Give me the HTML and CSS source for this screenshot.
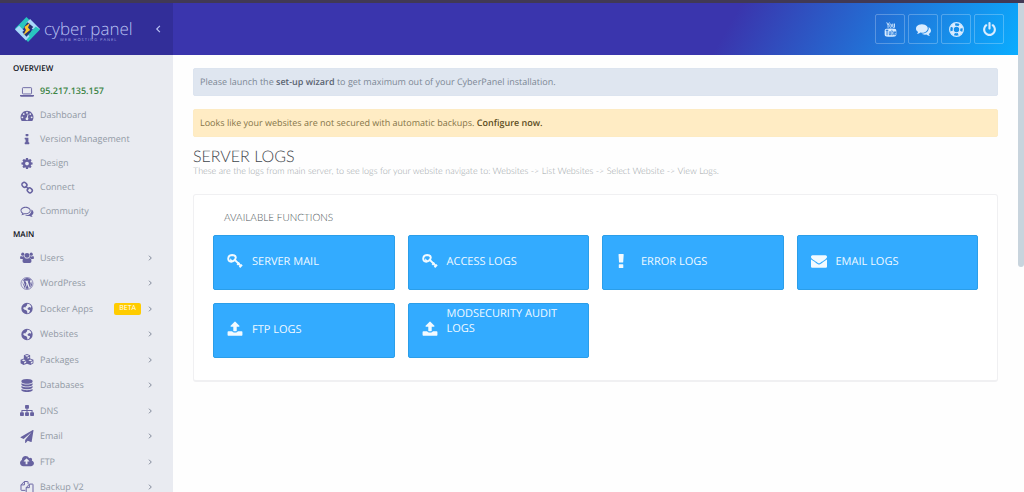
FILE: index.html
```html
<!DOCTYPE html>
<html lang="en">
<head>
<meta charset="utf-8">
<title>Server Logs - CyberPanel</title>
<meta name="viewport" content="width=device-width, initial-scale=1">
<link rel="stylesheet" href="styles.css">
</head>
<body>
<svg class="sprite" aria-hidden="true">
  <symbol id="laptop" viewBox="0 0 20 16"><rect x="3.500" y="2.500" width="13" height="9" rx="1" fill="none" stroke="currentColor" stroke-width="1.300"/><path d="M0 13h20v1q0 1.400-2 1.400H2q-2 0-2-1.400z"/></symbol>
  <symbol id="dashboard" viewBox="0 0 1792 1792"><path fill-rule="evenodd" d="M1792 1152q0 261-141 483-19 29-54 29H195q-35 0-54-29Q0 1414 0 1152q0-182 71-348t191-286 286-191 348-71 348 71 286 191 191 286 71 348zM384 1152a128 128 0 1 0-256 0a128 128 0 1 0 256 0zM576 704a128 128 0 1 0-256 0a128 128 0 1 0 256 0zM1024 512a128 128 0 1 0-256 0a128 128 0 1 0 256 0zM1472 704a128 128 0 1 0-256 0a128 128 0 1 0 256 0zM1664 1152a128 128 0 1 0-256 0a128 128 0 1 0 256 0zM1004 1185l101-382q6-26-7.500-48.500t-38.500-29.500-48 6.500-30 39.500l-101 382q-60 5-107 43.500t-63 98.500q-20 77 20 146t117 89 146-20 89-117q16-60-6-117t-72-91z"/></symbol>
  <symbol id="info" viewBox="0 0 1792 1792"><path d="M1216 1344v128q0 26-19 45t-45 19h-512q-26 0-45-19t-19-45v-128q0-26 19-45t45-19h64v-384h-64q-26 0-45-19t-19-45v-128q0-26 19-45t45-19h384q26 0 45 19t19 45v576h64q26 0 45 19t19 45zm-128-1152v192q0 26-19 45t-45 19h-256q-26 0-45-19t-19-45v-192q0-26 19-45t45-19h256q26 0 45 19t19 45z"/></symbol>
  <symbol id="cog" viewBox="0 0 1792 1792"><path d="M1152 896q0-106-75-181t-181-75-181 75-75 181 75 181 181 75 181-75 75-181zm512-109v222q0 12-8 23t-20 13l-185 28q-19 54-39 91 35 50 107 138 10 12 10 25t-9 23q-27 37-99 108t-94 71q-12 0-26-9l-138-108q-44 23-91 38-16 136-29 186-7 28-36 28h-222q-14 0-24.500-8.500t-11.500-21.500l-28-184q-49-16-90-37l-141 107q-10 9-25 9-14 0-25-11-126-114-165-168-7-10-7-23 0-12 8-23 15-21 51-66.500t54-70.500q-27-50-41-99l-183-27q-13-2-21-12.500t-8-23.500v-222q0-12 8-23t19-13l186-28q14-46 39-92-40-57-107-138-10-12-10-24 0-10 9-23 26-36 98.500-107.500t94.500-71.500q13 0 26 10l138 107q44-23 91-38 16-136 29-186 7-28 36-28h222q14 0 24.500 8.500t11.500 21.500l28 184q49 16 90 37l142-107q9-9 24-9 13 0 25 10 129 119 165 170 7 8 7 22 0 12-8 23-15 21-51 66.500t-54 70.500q26 50 41 98l183 28q13 2 21 12.500t8 23.500z"/></symbol>
  <symbol id="chain" viewBox="0 0 16 16"><g fill="none" stroke="currentColor" stroke-width="1.900"><rect x="1.700" y="2" width="6.200" height="5.400" rx="2.500" transform="rotate(45 4.800 4.700)"/><rect x="8.300" y="8.800" width="6.200" height="5.400" rx="2.500" transform="rotate(45 11.400 11.500)"/><path d="M6.200 6.200l4 4"/></g></symbol>
  <symbol id="talk" viewBox="0 0 1792 1792"><path fill-rule="evenodd" d="M704 384q-153 0-286 52t-211.500 141T128 768q0 82 53 158t149 132l97 56-35 84q34-20 62-39l44-31 53 10q78 14 153 14 153 0 286-52t211.500-141T1280 768t-78.500-191T990 436t-286-52zm0-128c389 0 704 229 704 512s-315 512-704 512q-86 0-176-16-124 88-278 128-36 9-86 16-28 2-35-26c-4-20 45-60 82-110q24-34 43-80Q0 1040 0 768c0-283 315-512 704-512z"/><path d="M1526 1425q24 56 52 92c30 40 80 90 75 105q-10 32-41 26-50-7-86-16-154-40-278-128-90 16-176 16-271 0-472-132 480 30 690-160 260-190 214-600 288 150 288 396 0 250-266 401z"/></symbol>
  <symbol id="comments" viewBox="0 0 1792 1792"><path d="M1408 768q0 139-94 257t-256.500 186.500-353.500 68.500q-86 0-176-16-124 88-278 128-36 9-86 16-28 2-35-26c-4-20 45-60 82-110q24-34 43-80-124-72-195-177T0 768q0-139 94-257t256.500-186.500 353.500-68.500 353.500 68.500 256.500 186.500 94 257zm384 256q0 120-71 224.500t-195 176.500q24 56 52 92c30 40 80 90 75 105q-10 32-41 26-50-7-86-16-154-40-278-128-90 16-176 16-271 0-472-132 58 4 88 4 161 0 309-45t264-129q125-92 192-212t67-254q0-77-23-152 129 71 204 178t75 230z"/></symbol>
  <symbol id="users" viewBox="0 0 20 16"><circle cx="4" cy="3.300" r="2.300"/><circle cx="16" cy="3.300" r="2.300"/><circle cx="10" cy="5" r="3.400"/><path d="M0 9q0-3.200 1.500-3.200Q4 7.400 5.800 6q.4 1.800 1.300 2.600-1.700.2-2.600 1.500H1.600Q0 10.100 0 9zM20 9q0-3.200-1.500-3.200Q16 7.400 14.200 6q-.4 1.800-1.300 2.600 1.700.2 2.600 1.500h2.900Q20 10.100 20 9zM3.600 13.400q0-5 3-5.100 3.400 2.500 6.800 0 3 .1 3 5.100 0 2.400-2.400 2.400H6q-2.400 0-2.400-2.400z"/></symbol>
  <symbol id="wordpress" viewBox="0 0 16 16"><circle cx="8" cy="8" r="7.400" fill="none" stroke="currentColor" stroke-width=".8"/><path d="M1.700 5.300l3.700 9.100 2-6.100-1.200-3.100h-.9v-.7h4.500v.7h-1l2.500 7.500 1.200-3.900c.6-2-1.300-2.500-.7-4.200.3-.7.900-.9 1.400-.8A6.300 6.300 0 0 0 2.700 4.500h2v.7h-.9l2.300 7.100zM8.200 8.900l-1.900 5.300q2 .6 3.900-.1zM13.900 5.200c.1 1.600-.6 3-1.100 4.500l-1.500 4.100q4.600-3.500 2.600-8.600z"/></symbol>
  <symbol id="globe" viewBox="0 0 16 16"><path fill-rule="evenodd" d="M8 1a7 7 0 1 0 0 14A7 7 0 1 0 8 1zM8.500 2.200l2.600.7 2.100 2.400-.5 1.800-1.400-.9-1.500.5-1.300 1.500 1 1.400 1.800.2.500 1.100-1.300 2.200-2 .9-.3-2.200-1-1.500-2.700-1-1.400-1.800 1.700-1.200 1 .9.500-1.500 1.600-1.300z"/></symbol>
  <symbol id="cubes" viewBox="0 0 20 16"><path fill-rule="evenodd" d="M10 0l4.500 1.900v4.600l4.700 2v5L15 16l-5-2.100L5 16 .8 13.500v-5l4.700-2V1.900zM10 1.500L7 2.800l3 1.200 3-1.200zM10.700 7.100l2.600-1.200V4.100l-2.600 1.100zM5.200 8L2.300 9.200l2.900 1.200 2.900-1.200zM14.800 8l-2.900 1.200 2.900 1.200 2.900-1.200zM5.900 14l2.900-1.300v-2.200l-2.900 1.200zM15.500 14l2.500-1.300v-2.200l-2.500 1.200z"/></symbol>
  <symbol id="database" viewBox="0 0 1792 1792"><path d="M896 768q237 0 443-43t325-127v170q0 69-103 128t-280 93.500-385 34.500-385-34.500-280-93.500-103-128v-170q119 84 325 127t443 43zm0 768q237 0 443-43t325-127v170q0 69-103 128t-280 93.500-385 34.500-385-34.500-280-93.500-103-128v-170q119 84 325 127t443 43zm0-384q237 0 443-43t325-127v170q0 69-103 128t-280 93.500-385 34.500-385-34.500-280-93.500-103-128v-170q119 84 325 127t443 43zm0-1152q208 0 385 34.500t280 93.500 103 128v128q0 69-103 128t-280 93.500-385 34.500-385-34.500-280-93.500-103-128v-128q0-69 103-128t280-93.500 385-34.500z"/></symbol>
  <symbol id="sitemap" viewBox="0 0 18 16"><rect x="6.500" y="1" width="5" height="4.600" rx=".9"/><rect y="10.400" width="5" height="4.600" rx=".9"/><rect x="6.500" y="10.400" width="5" height="4.600" rx=".9"/><rect x="13" y="10.400" width="5" height="4.600" rx=".9"/><path d="M9 5v6M2.500 11V8h13v3" fill="none" stroke="currentColor" stroke-width="1.300"/></symbol>
  <symbol id="plane" viewBox="0 0 1792 1792"><path d="M1764 11q33 24 27 64l-256 1536q-5 29-32 45-14 8-31 8-11 0-24-5l-453-185-242 295q-18 23-49 23-13 0-22-4-19-7-30.500-23.500t-11.500-36.500v-349l864-1059-1069 925-395-162q-37-14-40-55-2-40 32-59l1664-960q15-9 32-9 20 0 36 11z"/></symbol>
  <symbol id="cloud" viewBox="0 0 1920 1792"><path d="M1280 864q0-14-9-23l-352-352q-9-9-23-9t-23 9l-351 351q-10 12-10 24 0 14 9 23t23 9h224v352q0 13 9.500 22.500t22.500 9.500h192q13 0 22.500-9.500t9.500-22.500v-352h224q13 0 22.500-9.500t9.500-22.500zm640 288q0 159-112.500 271.500t-271.500 112.500h-1088q-185 0-316.500-131.500t-131.500-316.500q0-130 70-240t188-165q-2-30-2-43 0-212 150-362t362-150q156 0 285.500 87t188.500 231q71-62 166-62 106 0 181 75t75 181q0 76-41 138 130 31 213.500 135.500t83.500 238.500z"/></symbol>
  <symbol id="copy" viewBox="0 0 16 16"><path d="M6 11.500H1.200q-.6 0-.6-.6V4.800L4.700.6h4q.6 0 .6.600v2.400M4.800.8v4h-4M7 15.400V8.200l4-4.400h3.800q.6 0 .6.600v10.400q0 .6-.6.6zM10.900 4v4.200H7" fill="none" stroke="currentColor" stroke-width="1.200"/></symbol>
  <symbol id="youtube" viewBox="0 0 16 18"><path d="M3.500.5l1.600 3.300V7M6.700.5L5.100 3.800" fill="none" stroke="currentColor" stroke-width="1.100"/><rect x="7.200" y="2.500" width="1.900" height="4" rx=".9" fill="none" stroke="currentColor"/><path d="M10.600 2v3.600q0 .9.800.9t1.200-.9V2v5" fill="none" stroke="currentColor"/><path fill-rule="evenodd" d="M3 8q5-.5 10 0 2 .2 2 2.200v5q0 2-2 2.300-5 .5-10 0-2-.3-2-2.300v-5Q1 8.200 3 8zM2.300 9.300v1.100h1V16h1.100v-5.600h1V9.300zM6 11v4.400q.4 1 1.500.2v.4h.8v-5h-.8v3.700q-.5.500-.6 0V11zM9.300 9.300V16h.8v-.4q1.500.9 1.700-.8v-2.600q-.2-1.700-1.700-.8V9.300zM10.100 12q.8-.6.800.3v2.400q0 .8-.8.300zM12.300 12.500v2.200q.1 1.400 1.200 1.400t1-1.700h-.7q0 1-.3.900-.4 0-.4-.8v-.7h1.400v-1.300q0-1.500-1.100-1.500t-1.100 1.500z"/></symbol>
  <symbol id="ring" viewBox="0 0 16 16"><g fill="none" stroke="currentColor"><circle cx="8" cy="8" r="7.300" stroke-width="1.300"/><circle cx="8" cy="8" r="3.500" stroke-width="1.200"/><circle cx="8" cy="8" r="5.400" stroke-width="3.400" stroke-dasharray="4.240 4.240" stroke-dashoffset="-2.120"/></g></symbol>
  <symbol id="power" viewBox="0 0 1792 1792"><path d="M1664 896q0 156-61 298t-164 245-245 164-298 61-298-61-245-164-164-245-61-298q0-182 80.500-343t226.500-270q43-32 95.500-25t83.500 50q32 42 24.500 94.500t-49.500 84.500q-98 74-151.500 181t-53.500 228q0 104 40.500 198.500t109.500 163.500 163.500 109.500 198.500 40.500 198.500-40.500 163.500-109.500 109.500-163.500 40.500-198.500q0-121-53.500-228t-151.500-181q-42-32-49.500-84.500t24.500-94.500q31-43 84-50t95 25q146 109 226.500 270t80.500 343zm-640-768v640q0 52-38 90t-90 38-90-38-38-90v-640q0-52 38-90t90-38 90 38 38 90z"/></symbol>
  <symbol id="key" viewBox="0 0 16 16"><path d="M5.200 2Q1.300 2.300 1.200 5.800q.1 2.700 3 2.900Q8.400 8 8.800 4.400 8.400 2 5.200 2z" fill="none" stroke="currentColor" stroke-width="1.900"/><path d="M3.200 5.200l3 3-3 .8z"/><path d="M7.300 6.400l7 7M10.300 11.900l2.200-2.200M12.500 14.300l2.500-2.500" fill="none" stroke="currentColor" stroke-width="2"/></symbol>
  <symbol id="exclamation" viewBox="0 0 16 16"><path d="M3 1h4.200q.5 0 .5.500L7.200 9q0 .6-.5.600H3.500Q3 9.600 3 9l-.5-7.500Q2.500 1 3 1zM3.300 11.200h3.500q.5 0 .5.500v2.700q0 .6-.5.600H3.300q-.5 0-.5-.6v-2.700q0-.5.500-.5z"/></symbol>
  <symbol id="envelope" viewBox="0 0 1792 1792"><path d="M1792 710v794q0 66-47 113t-113 47h-1472q-66 0-113-47t-47-113v-794q44 49 101 87 362 246 497 345 57 42 92.500 65.500t94.500 48 110 24.500h2q51 0 110-24.500t94.500-48 92.500-65.500q170-123 498-345 57-39 100-87zm0-294q0 79-49 151t-122 123q-376 261-468 325-10 7-42.500 31t-54 38.500-52 32.500-57.500 27-50 9h-2q-23 0-50-9t-57.500-27-52-32.500-54-38.500-42.500-31q-91-64-262-182.500t-205-142.500q-62-42-117-115.500t-55-136.500q0-78 41.500-130t118.500-52h1472q65 0 112.500 47t47.500 113z"/></symbol>
  <symbol id="upload" viewBox="0 0 1792 1792"><path d="M1728 1248v320q0 40-28 68t-68 28h-1472q-40 0-68-28t-28-68v-320q0-40 28-68t68-28h427q21 56 70.500 92t110.500 36h256q61 0 110.500-36t70.500-92h427q40 0 68 28t28 68zm-325-648q-17 40-59 40h-256v448q0 26-19 45t-45 19h-256q-26 0-45-19t-19-45v-448h-256q-42 0-59-40-17-39 14-69l448-448q18-19 45-19t45 19l448 448q31 30 14 69z"/></symbol>
  <symbol id="right" viewBox="0 0 6 8"><path d="M2 1.700L4.300 4 2 6.300" fill="none" stroke="currentColor"/></symbol>
  <symbol id="left" viewBox="0 0 6 8"><path d="M4.200 1.300L1.500 4l2.700 2.700" fill="none" stroke="currentColor"/></symbol>
</svg>

<div class="page">
  <aside class="sidebar">
    <div class="brand">
      <a class="logo" href="#">
        <svg class="logo-mark" viewBox="0 0 24 24" aria-hidden="true"><path d="M11 0L0 11l4 4L15 4z" fill="#29c5c0"/><path d="M14.500 2L24 11.500 20 15l-9-9.500z" fill="#a9d8fb"/><path d="M24 12L12.500 24 9 20 20 9z" fill="#29c5c0"/><path d="M0 12l4-3.500 10 10-3.500 4z" fill="#a9d8fb"/><path d="M12 5l5.500 4.500-3 3 1 1.500-4.500 5-4-4.500 3-2.500-1.500-2z" fill="#273271"/><path d="M14.500 5.500L9 9.500l1.500 3-2.500 5 6.500-5-2-2.500z" fill="#fbc52d"/></svg>
        <span class="logo-text"><span class="logo-name">cyber panel</span><span class="logo-tag">WEB HOSTING PANEL</span></span>
      </a>
      <button class="collapse" type="button" aria-label="Collapse menu"><svg class="arrow"><use href="#left"/></svg></button>
    </div>
    <nav class="nav">
      <h2 class="nav-title">OVERVIEW</h2>
      <ul class="menu">
        <li><a class="item item-ip" href="#"><svg class="icon"><use href="#laptop"/></svg>95.217.135.157</a></li>
        <li><a class="item" href="#"><svg class="icon"><use href="#dashboard"/></svg>Dashboard</a></li>
        <li><a class="item" href="#"><svg class="icon"><use href="#info"/></svg>Version Management</a></li>
        <li><a class="item" href="#"><svg class="icon"><use href="#cog"/></svg>Design</a></li>
        <li><a class="item" href="#"><svg class="icon"><use href="#chain"/></svg>Connect</a></li>
        <li><a class="item" href="#"><svg class="icon"><use href="#talk"/></svg>Community</a></li>
      </ul>
      <h2 class="nav-title">MAIN</h2>
      <ul class="menu menu-main">
        <li><a class="item" href="#"><svg class="icon"><use href="#users"/></svg>Users<svg class="arrow"><use href="#right"/></svg></a></li>
        <li><a class="item" href="#"><svg class="icon"><use href="#wordpress"/></svg>WordPress<svg class="arrow"><use href="#right"/></svg></a></li>
        <li><a class="item" href="#"><svg class="icon"><use href="#globe"/></svg>Docker Apps<span class="beta">BETA</span><svg class="arrow"><use href="#right"/></svg></a></li>
        <li><a class="item" href="#"><svg class="icon"><use href="#globe"/></svg>Websites<svg class="arrow"><use href="#right"/></svg></a></li>
        <li><a class="item" href="#"><svg class="icon"><use href="#cubes"/></svg>Packages<svg class="arrow"><use href="#right"/></svg></a></li>
        <li><a class="item" href="#"><svg class="icon"><use href="#database"/></svg>Databases<svg class="arrow"><use href="#right"/></svg></a></li>
        <li><a class="item" href="#"><svg class="icon"><use href="#sitemap"/></svg>DNS<svg class="arrow"><use href="#right"/></svg></a></li>
        <li><a class="item" href="#"><svg class="icon"><use href="#plane"/></svg>Email<svg class="arrow"><use href="#right"/></svg></a></li>
        <li><a class="item" href="#"><svg class="icon"><use href="#cloud"/></svg>FTP<svg class="arrow"><use href="#right"/></svg></a></li>
        <li><a class="item" href="#"><svg class="icon"><use href="#copy"/></svg>Backup V2<svg class="arrow"><use href="#right"/></svg></a></li>
      </ul>
    </nav>
  </aside>

  <div class="main">
    <header class="topbar">
      <a class="tool" href="#" aria-label="YouTube"><svg class="tool-icon"><use href="#youtube"/></svg></a>
      <a class="tool" href="#" aria-label="Community"><svg class="tool-icon"><use href="#comments"/></svg></a>
      <a class="tool" href="#" aria-label="Support"><svg class="tool-icon"><use href="#ring"/></svg></a>
      <a class="tool" href="#" aria-label="Log out"><svg class="tool-icon"><use href="#power"/></svg></a>
    </header>
    <main class="content">
      <p class="alert alert-info">Please launch the <a href="#">set-up wizard</a> to get maximum out of your CyberPanel installation.</p>
      <p class="alert alert-warning">Looks like your websites are not secured with automatic backups. <a href="#">Configure now.</a></p>
      <h1 class="title">SERVER LOGS</h1>
      <p class="subtitle">These are the logs from main server, to see logs for your website navigate to: Websites -&gt; List Websites -&gt; Select Website -&gt; View Logs.</p>
      <section class="panel">
        <h2 class="panel-title">AVAILABLE FUNCTIONS</h2>
        <div class="tiles">
          <a class="tile" href="#"><svg class="tile-icon"><use href="#key"/></svg><span class="tile-label">SERVER MAIL</span></a>
          <a class="tile" href="#"><svg class="tile-icon"><use href="#key"/></svg><span class="tile-label">ACCESS LOGS</span></a>
          <a class="tile" href="#"><svg class="tile-icon"><use href="#exclamation"/></svg><span class="tile-label">ERROR LOGS</span></a>
          <a class="tile" href="#"><svg class="tile-icon"><use href="#envelope"/></svg><span class="tile-label">EMAIL LOGS</span></a>
          <a class="tile" href="#"><svg class="tile-icon"><use href="#upload"/></svg><span class="tile-label">FTP LOGS</span></a>
          <a class="tile" href="#"><svg class="tile-icon"><use href="#upload"/></svg><span class="tile-label tile-label-wrapped">MODSECURITY AUDIT LOGS</span></a>
        </div>
      </section>
    </main>
  </div>
  <div class="scroll-track"><div class="scroll-thumb"></div></div>
</div>
</body>
</html>
```

FILE: styles.css
```css
* { box-sizing: border-box; }
body {
  margin: 0;
  background: #fefefe;
  color: #7f8c8d;
  font: 9px/16px "Open Sans", "Noto Sans", sans-serif;
  text-rendering: geometricPrecision;
}
h1, h2, p, ul { margin: 0; padding: 0; font-weight: 400; }
ul { list-style: none; }
a { color: inherit; text-decoration: none; }
svg { fill: currentColor; flex: none; }
.sprite { display: none; }

.page {
  display: flex;
  height: 100vh;
  border-top: 3px solid #413955;
  overflow: hidden;
}

.sidebar {
  flex: none;
  width: 173px;
  display: flex;
  flex-direction: column;
  background: #e9ebf1;
}
.brand {
  flex: none;
  height: 52px;
  padding: 0 11px 0 15px;
  display: flex;
  align-items: center;
  justify-content: space-between;
  background: #322e99;
  color: #b9c2f2;
}
.logo { display: flex; align-items: center; gap: 4px; }
.logo-mark { width: 25px; height: 25px; }
.logo-text { display: flex; flex-direction: column; padding-top: 5px; }
.logo-name { font: 300 17px/18px "Open Sans", sans-serif; }
.logo-tag { padding-left: 16px; font: 4px/6px "Open Sans", sans-serif; letter-spacing: 1px; color: #a3a7e2; }
.collapse {
  padding: 0;
  display: flex;
  border: 0;
  background: none;
  color: inherit;
}
.arrow { width: 6px; height: 8px; }
.collapse .arrow { width: 7px; height: 10px; }

.nav {
  flex: 1;
  padding: 5px 20px 0 13px;
  overflow-y: auto;
  scrollbar-width: none;
}
.nav-title { font-size: 8px; line-height: 18px; font-weight: 600; color: #10121a; }
.menu { padding-top: 1px; margin-bottom: 3px; }
.menu-main { display: grid; grid-auto-rows: 1fr; min-height: 256px; }
.menu li { display: grid; }
.item {
  min-height: 24px;
  padding-left: 7px;
  display: flex;
  align-items: center;
  color: #929aa5;
}
.item .icon { width: 14px; height: 13px; margin-right: 6px; color: #6762a0; }
.item .arrow { margin-left: auto; color: #81899a; }
.item-ip { color: #3c8446; font-weight: 600; }
.beta {
  margin-left: auto;
  padding: 0 5px;
  border-radius: 2px;
  background: #fc0;
  color: #fff;
  font-size: 7px;
  line-height: 12px;
}
.beta + .arrow { margin-left: 6px; }

.main { flex: 1; min-width: 0; display: flex; flex-direction: column; }
.topbar {
  flex: none;
  height: 52px;
  padding: 0 14px;
  display: flex;
  align-items: center;
  justify-content: flex-end;
  gap: 3px;
  background: linear-gradient(120deg, #3a35ad 0%, #3a35ad 65%, #0aadff 100%);
}
.tool {
  width: 30px;
  height: 30px;
  display: grid;
  place-items: center;
  border: 1px solid rgba(255, 255, 255, 0.25);
  border-radius: 2px;
  color: #d9ecff;
}
.tool-icon { width: 15px; height: 15px; }

.content { flex: 1; padding: 13px 20px; overflow: hidden; }
.alert {
  margin-bottom: 13px;
  padding: 5px 6px;
  border: 1px solid;
  border-radius: 2px;
}
.alert a { font-weight: 600; }
.alert-info { background: #dfe6f0; border-color: #dce4ef; color: #7d8896; }
.alert-info a { color: #5a6370; }
.alert-warning { background: #ffecc4; border-color: #fdebc3; color: #857549; margin-bottom: 12px; }
.alert-warning a { color: #5c4d22; }
.title { font: 300 16px/16px Lato, sans-serif; color: #3e464c; }
.subtitle { font: 300 9px/12px Lato, sans-serif; color: #9da5a8; }
.panel {
  margin-top: 17px;
  padding: 15px 19px 22px;
  border: 1px solid #f0f0f2;
  border-bottom-width: 2px;
  border-radius: 3px;
  background: #fff;
}
.panel-title { padding-left: 11px; font: 300 10px/16px Lato, sans-serif; color: #4e5659; }
.tiles {
  margin-top: 9px;
  display: grid;
  grid-template-columns: repeat(4, 1fr);
  gap: 13px;
}
.tile {
  height: 55px;
  padding: 0 13px 3px;
  display: flex;
  align-items: center;
  border: 1px solid #2b9ee9;
  border-radius: 2px;
  background: #33abff;
  color: #f2faff;
}
.tile-icon { width: 16px; height: 16px; margin-right: 9px; }
.tile-label { font-size: 11px; line-height: 15px; }
.tile-label-wrapped { align-self: flex-start; padding-top: 2px; }

.scroll-track { flex: none; width: 6px; background: #fefefe; }
.scroll-thumb { height: 54%; border-radius: 0 0 3px 3px; background: #c8d4dd; }
```
